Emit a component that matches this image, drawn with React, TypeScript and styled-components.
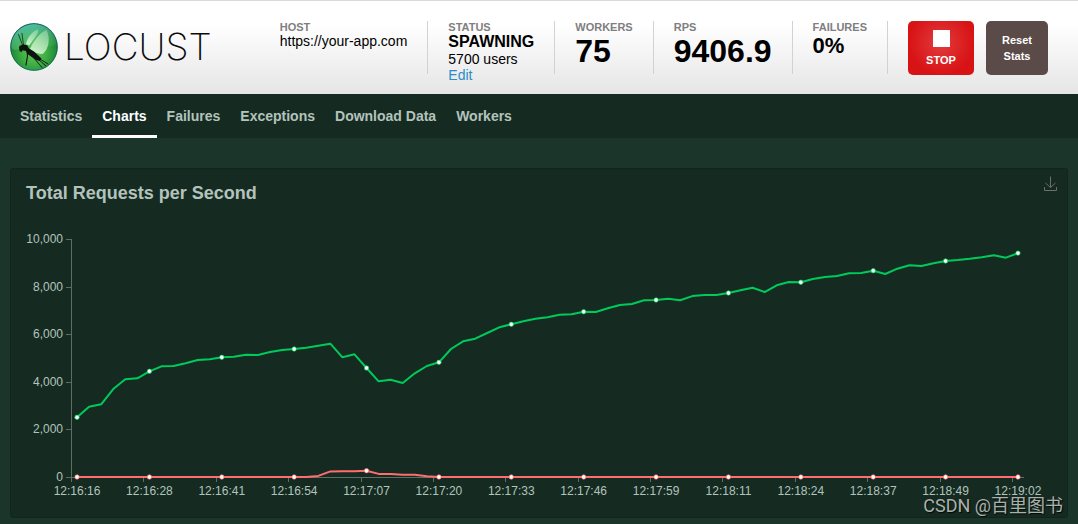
import React, { useLayoutEffect, useRef, useState } from "react";
import styled, { createGlobalStyle } from "styled-components";

const GlobalStyle = createGlobalStyle`
  *, *::before, *::after { box-sizing: border-box; }
  body {
    margin: 0;
    background: #1b352b;
    color: #b3c3bc;
    font-family: "Liberation Sans", Arial, Helvetica, sans-serif;
    font-size: 14px;
  }
  h2, p { margin: 0; }
`;

const Page = styled.div`
  position: relative;
  min-height: 100vh;
  padding-bottom: 6px;
`;

const Header = styled.header`
  display: flex;
  align-items: flex-start;
  justify-content: space-between;
  padding: 20px 30px 19px 10px;
  border-top: 1px solid #d9d9de;
  background: linear-gradient(#ffffff 25%, #e5e5e5);
`;

const Brand = styled.a`
  display: flex;
  align-items: center;
  gap: 6px;
  height: 52px;
  color: #0b0b0b;
  text-decoration: none;
`;

const BrandName = styled.span`
  font-family: Inter, "Liberation Sans", sans-serif;
  font-size: 37px;
  font-weight: 200;
  line-height: 52px;
`;

const Stats = styled.div`
  display: flex;
  align-items: flex-start;
`;

const Stat = styled.div`
  height: 53px;
  padding: 0 20px;
  border-right: 1px solid #d2d2d2;
  color: #000;
  line-height: 16px;
  white-space: nowrap;
`;

const StatLabel = styled.div`
  color: #7f7f7f;
  font-size: 11px;
  font-weight: bold;
  line-height: 12px;
`;

const StatValue = styled.div<{ $size: number; $line: number }>`
  font-size: ${(p) => p.$size}px;
  font-weight: bold;
  line-height: ${(p) => p.$line}px;
`;

const EditLink = styled.a`
  color: #2b8cc9;
  text-decoration: none;
`;

const HeaderButton = styled.button<{ $kind: "stop" | "reset" }>`
  display: flex;
  flex-direction: column;
  align-items: center;
  justify-content: center;
  gap: 5px;
  width: ${(p) => (p.$kind === "stop" ? 66 : 62)}px;
  height: 54px;
  margin-left: ${(p) => (p.$kind === "stop" ? 20 : 12)}px;
  padding: ${(p) => (p.$kind === "stop" ? "2px 10px 0" : "0 10px")};
  border: 0;
  border-radius: 5px;
  background: ${(p) =>
    p.$kind === "stop"
      ? "radial-gradient(circle at 50% 40%, #e23c3e 0, #d81315 32px)"
      : "#5a4b49"};
  color: #fff;
  font: bold 11px/16px "Liberation Sans", Arial, sans-serif;
  cursor: pointer;
`;

const StopSquare = styled.span`
  width: 17px;
  height: 17px;
  background: #fff;
`;

const Nav = styled.nav`
  display: flex;
  padding: 0 10px;
  background: #152b22;
`;

const Tab = styled.a<{ $active: boolean }>`
  height: 44px;
  padding: 0 10px;
  border-bottom: 3px solid ${(p) => (p.$active ? "#fff" : "transparent")};
  color: ${(p) => (p.$active ? "#fff" : "#b3c3bc")};
  font-weight: bold;
  line-height: 44px;
  text-decoration: none;
`;

const Panel = styled.section`
  margin: 30px 10px 0;
  border: 1px solid #11251d;
  border-radius: 3px;
  background: #152b22;
`;

const PanelHeader = styled.div`
  display: flex;
  align-items: flex-start;
  justify-content: space-between;
  padding: 7px 9px 0 15px;
`;

const PanelTitle = styled.h2`
  font-size: 18px;
  line-height: 34px;
`;

const SaveButton = styled.button`
  display: flex;
  padding: 0;
  border: 0;
  background: none;
  color: #6b6f6d;
  cursor: pointer;
`;

const ChartArea = styled.div`
  height: 307px;
  overflow: hidden;
`;

const ChartSvg = styled.svg`
  display: block;
  width: 100%;
  height: 100%;
  font-size: 12px;
  fill: #b3c3bc;
`;

const Watermark = styled.div`
  position: absolute;
  right: 15px;
  bottom: 8px;
  color: #c3c9c6;
  font-family: Roboto, "Noto Sans CJK SC", sans-serif;
  font-size: 18px;
  line-height: 20px;
  text-shadow: 1px 1px 1px #000;
  opacity: 0.85;
`;

const tabs = ["Statistics", "Charts", "Failures", "Exceptions", "Download Data", "Workers"];

const requests = [
  2508, 2954, 3055, 3697, 4105, 4147, 4441, 4651, 4664, 4777, 4916, 4945, 5029,
  5055, 5139, 5126, 5252, 5336, 5378, 5433, 5517, 5601, 5029, 5155, 4580, 4021,
  4088, 3950, 4357, 4664, 4819, 5378, 5701, 5811, 6050, 6290, 6416, 6542, 6651,
  6710, 6820, 6836, 6945, 6933, 7088, 7227, 7269, 7424, 7437, 7492, 7424, 7600,
  7647, 7647, 7731, 7844, 7954, 7773, 8055, 8193, 8181, 8319, 8403, 8445, 8559,
  8571, 8668, 8529, 8752, 8895, 8866, 8979, 9076, 9118, 9173, 9231, 9315, 9215,
  9407,
];

const failures = requests.map((_, i) => {
  const burst = [45, 235, 245, 245, 265, 130, 125, 95, 90, 35];
  return burst[i - 20] ?? 0;
});

const timeLabels = [
  "12:16:16", "12:16:28", "12:16:41", "12:16:54", "12:17:07", "12:17:20", "12:17:33",
  "12:17:46", "12:17:59", "12:18:11", "12:18:24", "12:18:37", "12:18:49", "12:19:02",
];

const PLOT = { left: 60, right: 43, top: 29, bottom: 267, step: 6, max: 10000 };

function RequestsChart() {
  const ref = useRef<HTMLDivElement>(null);
  const [width, setWidth] = useState(0);

  useLayoutEffect(() => {
    const el = ref.current;
    if (!el) return;
    const measure = () => setWidth(el.clientWidth);
    measure();
    const observer = new ResizeObserver(measure);
    observer.observe(el);
    return () => observer.disconnect();
  }, []);

  const right = width - PLOT.right;
  const band = (right - PLOT.left) / requests.length;
  const x = (i: number) => PLOT.left + band * (i + 0.5);
  const y = (v: number) => PLOT.bottom - (v / PLOT.max) * (PLOT.bottom - PLOT.top);
  const series = [
    { color: "#00ca5a", data: requests },
    { color: "#ff6d6d", data: failures },
  ];

  return (
    <ChartArea ref={ref}>
      {width > 0 && (
        <ChartSvg role="img" aria-label="Total requests and failures per second">
          <g stroke="#5b6f66" strokeWidth="1" shapeRendering="crispEdges">
            <line x1={PLOT.left + 0.5} x2={PLOT.left + 0.5} y1={PLOT.top} y2={PLOT.bottom} />
            <line x1={PLOT.left} x2={right} y1={PLOT.bottom + 0.5} y2={PLOT.bottom + 0.5} />
            {[0, 2000, 4000, 6000, 8000, 10000].map((v) => (
              <line
                key={v}
                x1={PLOT.left - 5}
                x2={PLOT.left}
                y1={Math.round(y(v)) + 0.5}
                y2={Math.round(y(v)) + 0.5}
              />
            ))}
            {timeLabels.map((t, i) => {
              const tx = Math.round(PLOT.left + band * i * PLOT.step) + 0.5;
              return <line key={t} x1={tx} x2={tx} y1={PLOT.bottom} y2={PLOT.bottom + 5} />;
            })}
          </g>
          {[0, 2000, 4000, 6000, 8000, 10000].map((v) => (
            <text key={v} x={PLOT.left - 8} y={y(v) + 4} textAnchor="end">
              {v.toLocaleString("en-US")}
            </text>
          ))}
          {timeLabels.map((t, i) => (
            <text key={t} x={x(i * PLOT.step)} y={PLOT.bottom + 18} textAnchor="middle">
              {t}
            </text>
          ))}
          {series.map((s) => (
            <g key={s.color} stroke={s.color}>
              <polyline
                fill="none"
                strokeWidth="2"
                strokeLinejoin="bevel"
                points={s.data.map((v, i) => `${x(i)},${y(v)}`).join(" ")}
              />
              {timeLabels.map((t, i) => (
                <circle
                  key={t}
                  cx={x(i * PLOT.step)}
                  cy={y(s.data[i * PLOT.step])}
                  r="2.2"
                  strokeWidth="0.7"
                  fill="#fff"
                />
              ))}
            </g>
          ))}
        </ChartSvg>
      )}
    </ChartArea>
  );
}

function LocustLogo() {
  return (
    <svg width="48" height="48" viewBox="0 0 48 48" aria-hidden="true">
      <defs>
        <radialGradient id="globe" cx="50%" cy="62%" r="58%">
          <stop offset="0" stopColor="#63c65c" />
          <stop offset="0.45" stopColor="#3fae42" />
          <stop offset="0.8" stopColor="#1f8a3c" />
          <stop offset="1" stopColor="#12644a" />
        </radialGradient>
        <linearGradient id="gloss" x1="0" y1="0" x2="0.5" y2="1">
          <stop offset="0" stopColor="#59cfc4" stopOpacity="0.95" />
          <stop offset="1" stopColor="#7be08a" stopOpacity="0.15" />
        </linearGradient>
        <linearGradient id="wing" x1="0.7" y1="0" x2="0.3" y2="1">
          <stop offset="0" stopColor="#b9e8c4" stopOpacity="0.5" />
          <stop offset="1" stopColor="#dcf7da" stopOpacity="0.9" />
        </linearGradient>
      </defs>
      <circle cx="24" cy="24" r="23.7" fill="url(#globe)" />
      <path d="M1.5 25C.5 11 11 1 24 1s22.500 9 22.500 20C38 27 28 20 18 23S6 29 1.500 25Z" fill="url(#gloss)" />
      <path d="M3 33a23 23 0 0 0 42 0c-3 7-10 12.500-21 12.500S6 40 3 33Z" fill="#2aa58c" opacity=".7" />
      <path d="M16 21.500C17 15 22 8 28 6.500c1.500 3-3 8-8.500 15.500Z" fill="url(#wing)" />
      <path d="M20 26C23 19 29 10 36.500 7c4 7 2.500 20-4 24-4 0-9-1.500-12.500-5Z" fill="url(#wing)" />
      <circle cx="24" cy="24" r="23.300" fill="none" stroke="#12604f" strokeWidth="1" opacity=".7" />
      <path
        d="M9 24.500 9.500 23l3-1.500 4.500.5 2 3.500 5 3 7.500 7-1.500 2.500-4-1-8.500-6-1.500-3-3.500-.8L11.500 29l-2-1Z"
        fill="#0d130f"
      />
      <g fill="none" stroke="#0d130f" strokeLinecap="round" strokeLinejoin="round">
        <path d="m12.500 22-4-10.500M13.500 22 12 10.500" strokeWidth=".7" />
        <path d="m17 28 .5 5-1.500 9" strokeWidth="1.100" />
        <path d="m23 34 9 10.500M28 36l8 7M30 36l8 5" strokeWidth=".9" />
      </g>
    </svg>
  );
}

export default function App() {
  return (
    <Page>
      <GlobalStyle />
      <Header>
        <Brand href="#" aria-label="Locust">
          <LocustLogo />
          <BrandName>LOCUST</BrandName>
        </Brand>
        <Stats>
          <Stat>
            <StatLabel>HOST</StatLabel>
            <p>https://your-app.com</p>
          </Stat>
          <Stat>
            <StatLabel>STATUS</StatLabel>
            <StatValue $size={16} $line={18}>SPAWNING</StatValue>
            <p>5700 users</p>
            <EditLink href="#edit">Edit</EditLink>
          </Stat>
          <Stat>
            <StatLabel>WORKERS</StatLabel>
            <StatValue $size={32} $line={36}>75</StatValue>
          </Stat>
          <Stat>
            <StatLabel>RPS</StatLabel>
            <StatValue $size={32} $line={36}>9406.9</StatValue>
          </Stat>
          <Stat>
            <StatLabel>FAILURES</StatLabel>
            <StatValue $size={22} $line={26}>0%</StatValue>
          </Stat>
          <HeaderButton type="button" $kind="stop">
            <StopSquare />
            STOP
          </HeaderButton>
          <HeaderButton type="button" $kind="reset">Reset Stats</HeaderButton>
        </Stats>
      </Header>
      <Nav>
        {tabs.map((t) => (
          <Tab key={t} href={`#${t.toLowerCase().replace(" ", "-")}`} $active={t === "Charts"}>
            {t}
          </Tab>
        ))}
      </Nav>
      <Panel>
        <PanelHeader>
          <PanelTitle>Total Requests per Second</PanelTitle>
          <SaveButton type="button" aria-label="Save as image">
            <svg width="16" height="16" viewBox="0 0 16 16" fill="none" stroke="currentColor" aria-hidden="true">
              <path d="M2.500 11v3.500h12V11M8.500 0.500v11M3.500 7l5 4.500 5-4.500" />
            </svg>
          </SaveButton>
        </PanelHeader>
        <RequestsChart />
      </Panel>
      <Watermark>CSDN @百里图书</Watermark>
    </Page>
  );
}
